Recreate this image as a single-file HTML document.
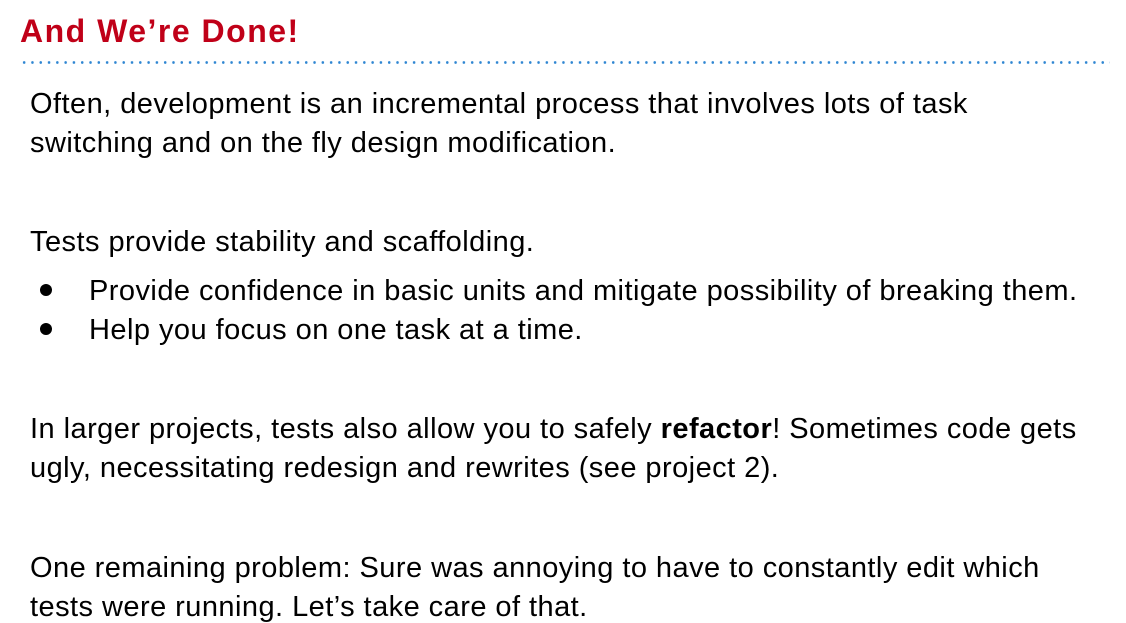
<!DOCTYPE html>
<html><head><meta charset="utf-8"><style>
html,body{margin:0;padding:0;background:#fff;width:1126px;height:623px;overflow:hidden;position:relative;font-family:"Liberation Sans",sans-serif;}
.t{position:absolute;left:20px;top:13px;font-size:32px;letter-spacing:1.5px;font-weight:bold;color:#c00018;white-space:nowrap;}
.dots{position:absolute;left:20px;top:61px;width:1090px;height:3px;background-image:radial-gradient(circle,#2f86d2 1.2px,transparent 1.5px);background-size:8.3px 3px;}
.l{position:absolute;left:30px;font-size:29px;letter-spacing:0.45px;color:#000;white-space:nowrap;line-height:30px;}
.b{left:89px;}
.bul{position:absolute;left:40px;width:12px;height:12px;border-radius:50%;background:#000;}
</style></head><body>
<div class="t">And We’re Done!</div>
<div class="dots"></div>
<div class="l" style="top:89px">Often, development is an incremental process that involves lots of task</div>
<div class="l" style="top:128px">switching and on the fly design modification.</div>
<div class="l" style="top:227px">Tests provide stability and scaffolding.</div>
<div class="bul" style="top:284px"></div>
<div class="l b" style="top:276px">Provide confidence in basic units and mitigate possibility of breaking them.</div>
<div class="bul" style="top:323px"></div>
<div class="l b" style="top:315px">Help you focus on one task at a time.</div>
<div class="l" style="top:414px">In larger projects, tests also allow you to safely <b>refactor</b>! Sometimes code gets</div>
<div class="l" style="top:453px">ugly, necessitating redesign and rewrites (see project 2).</div>
<div class="l" style="top:553px">One remaining problem: Sure was annoying to have to constantly edit which</div>
<div class="l" style="top:592px">tests were running. Let’s take care of that.</div>
</body></html>
